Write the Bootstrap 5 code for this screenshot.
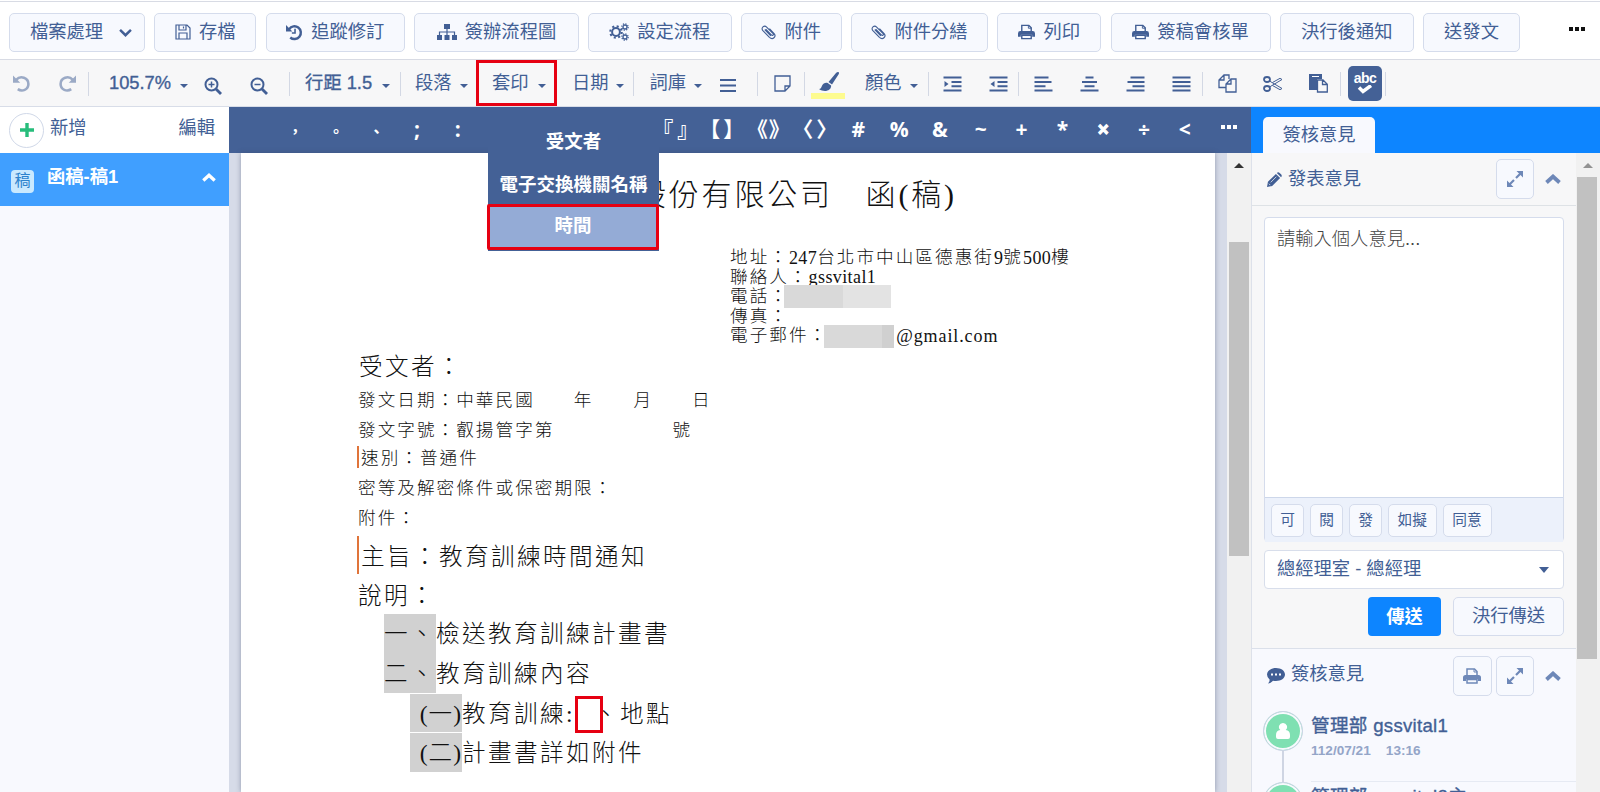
<!DOCTYPE html>
<html lang="zh-Hant">
<head>
  <meta charset="UTF-8">
  <title>函稿編輯</title>
  <meta name="viewport" content="width=device-width, initial-scale=1">
  <link href="https://cdn.jsdelivr.net/npm/bootstrap@5.3.0/dist/css/bootstrap.min.css" rel="stylesheet">
  <style>
    body {
      width: 1600px;
      height: 792px;
      overflow: hidden;
      background: #fff;
      color: #425f95;
      font-family: "Liberation Sans", "Noto Sans CJK TC", sans-serif;
      font-size: 18.3px;
      line-height: 1;
      white-space: nowrap;
    }
    svg {
      display: block;
      flex: none;
      fill: none;
      stroke: currentColor;
      stroke-width: 2;
    }
    .solid { fill: currentColor; stroke: none; }

    /* top buttons */
    .action-bar {
      height: 59px;
      border-top: 1px solid #d8dbe4;
      border-bottom: 1px solid #d8dbe4;
      margin-top: 1px;
      padding: 11px 15px 0 9px;
      gap: 9.25px;
    }
    .action-bar .btn, .tool-btn {
      height: 39px;
      padding: 0 0 1px;
      gap: 8px;
      border: 1.5px solid #d5dcec;
      border-radius: 5px;
      background: #f7f9fe;
      color: #425f95;
      font-size: 18.3px;
      line-height: 1;
    }
    .action-bar .btn:first-child { padding-left: 8px; }
    .dots-more { gap: 2px; margin: 14px 0 0 auto; }
    .dots-more i { width: 4px; height: 4px; background: #111; }

    /* format toolbar */
    .format-bar { height: 47px; background: #f7f7f8; border-bottom: 1px solid #d8dde8; padding-left: 13px; }
    .format-bar > div { flex: none; height: 46px; display: flex; align-items: center; padding-top: 1px; }
    .tool-sep { width: 1px; height: 24px; background: #d3d8e4; }
    .caret { border: 4px solid transparent; border-top-color: #425f95; border-bottom: 0; margin-top: 4px; }
    .num { -webkit-text-stroke: .35px currentColor; }
    .faded { opacity: .5; }
    .abc-btn { width: 34px; height: 35px; background: #446196; border-radius: 5px; color: #fff; font-size: 14px; font-weight: bold; padding-top: 5px; letter-spacing: -.5px; }
    .marker { width: 34px; height: 27px; padding-left: 8px; background: linear-gradient(#fdfb8f, #fdfb8f) bottom / 100% 6px no-repeat; margin-top: 4px; }

    .work-area { height: 685px; }
    /* draft list */
    .draft-list { width: 229px; background: #f8f9fe; }
    .draft-head { height: 46px; background: #fff; padding: 0 14px 0 9px; }
    .add-round { width: 35px; height: 35px; border: 1px solid #d0d8e8; border-radius: 50%; color: #27bd7b; margin-right: 6px; }
    .draft-item { height: 53px; background: #409fff; color: #fff; padding: 0 13px 0 11px; font-weight: bold; }
    .draft-tag { width: 23px; height: 23px; border-radius: 4px; background: #c9e9ff; color: #2d83cd; font-size: 16px; font-weight: normal; margin: 3px 13px 0 0; }

    /* symbol strip and sheet */
    .editor-pane { width: 1022px; }
    .symbol-bar { height: 46px; background: #446196; color: #fff; font: bold 21px "Open Sans", "Noto Sans CJK TC", sans-serif; line-height: 1; padding-left: 46px; }
    .symbol-bar > div { flex: none; text-align: center; padding-bottom: 2px; }
    .tiny-mark { font: bold 15px/1 "Noto Sans CJK TC", sans-serif; }
    .heavy { -webkit-text-stroke: 1px #fff; }
    .more-squares { display: flex; justify-content: center; gap: 2px; padding-bottom: 5px; }
    .more-squares i { width: 4px; height: 4px; background: #fff; }
    .sheet-area { height: 639px; background: #d6dbe8; padding-left: 12px; }
    .sheet {
      width: 974px;
      height: 639px;
      background: #fff;
      box-shadow: 0 0 5px rgba(60,70,100,.45);
      color: #111;
      font: 300 17.6px "Liberation Serif", "Noto Sans CJK TC", serif;
      letter-spacing: 2.05px;
      padding-left: 116px;
      overflow: hidden;
    }
    .line { display: flex; align-items: center; white-space: pre; line-height: 1; }
    .latin { letter-spacing: .4px; font-weight: 400; font-size: 18px; }
    .sheet-title { height: 44px; margin-top: 20px; padding-left: 279px; font-size: 30px; letter-spacing: 2.8px; }
    .contact { margin: 31px 0 2px 373px; }
    .contact .line { height: 19.6px; }
    .masked { background: #d9d9d9; height: 23px; }
    #letterBody .line { padding-top: 5px; }
    .big { font-size: 23.6px; letter-spacing: 2.4px; }
    #letterBody .marked { padding-top: 0; }
    .marked > span:not(.blank-slot) { padding-top: 3px; }
    .changed { background: linear-gradient(#e0743a, #e0743a) left center / 2px 100% no-repeat; padding-left: 4px; }
    .changed:not(.big) { background-size: 2px 22px; background-position: left 4px; }
    .num-mark { background: #d1d1d1; height: 100%; width: 52px; display: flex; align-items: center; }
    .in-paren { justify-content: flex-end; letter-spacing: 1px; }
    .blank-slot { width: 28px; height: 37px; border: 3px solid #e60012; margin: 4px -9px 0 0; z-index: 1; background: #fff; }

    .scroll-col { background: #f1f1f1; width: 24px; }
    .scroll-col b { display: block; background: #c1c1c1; }
    .scroll-arrow { width: 10px; margin: 10px auto 0; border: 5px solid transparent; border-bottom-color: #333; border-top: 0; }

    /* floating menu */
    .merge-menu { position: absolute; left: 488px; top: 107px; width: 171px; height: 144px; background: #446196; color: #fff; font: bold 18.5px/1 "Noto Sans CJK TC", sans-serif; padding-top: 12px; z-index: 3; }
    .merge-menu div { height: 43px; display: flex; align-items: center; justify-content: center; }
    .merge-menu .picked { background: #94abd6; border: 3px solid #e60012; height: 46px; margin: -1px 0 0 -1px; border-radius: 2px; padding-bottom: 5px; }
    .merge-frame { position: absolute; left: 476px; top: 60px; width: 81px; height: 46px; border: 3px solid #e60012; z-index: 3; }

    /* opinion panel */
    .opinion-pane { width: 349px; }
    .opinion-tabs { height: 46px; background: #0d85ff; padding: 10px 0 0 12px; }
    .opinion-tab { width: 112px; height: 36px; background: #f8f9fe; border-radius: 5px 5px 0 0; }
    .opinion-body { width: 325px; background: #f7f7f8; border-left: 1px solid #dde1ea; }
    .opinion-head { padding: 0 15px; height: 53px; }
    .opinion-head .chevron { margin-left: 11px; color: #6e88b8; }
    .square { width: 38.5px; height: 40px; padding: 0; color: #6e88b8; }
    .write-box { width: 300px; height: 325px; margin: 11px 0 0 12px; border: 1px solid #d5dcec; border-radius: 4px; background: #fff; }
    .write-box p { height: 279px; padding: 12px 12px; font-weight: 300; color: #444; }
    .quick-row { height: 45px; background: #ecf1fb; border-top: 1px solid #cdd7ea; padding-left: 6px; gap: 6px; }
    .quick-row .tool-btn { height: 33px; font-size: 14.7px; padding: 0; }
    .dept { width: 300px; height: 39px; margin: 8px 0 8px 12px; padding: 0 14px 0 12px; border: 1px solid #d8deeb; border-radius: 4px; background: #fff; }
    .send-btn { width: 73px; height: 39px; background: #0d85ff; color: #fff; border-radius: 4px; font-weight: bold; border: 0; padding: 0; font-size: 18.3px; margin-right: 12px; }
    .history { border-top: 1px solid #dbe0ea; background: #f8f9fe; margin-top: 12px; height: 144px; overflow: hidden; }
    .avatar { width: 40px; height: 40px; border-radius: 50%; border: 1px solid #ccd4e6; background: #7fe0b2; box-shadow: inset 0 0 0 2px #f8f9fe; color: #fff; flex: none; }
    .person { height: 71px; padding-left: 11px; gap: 8px; }
    .stem { width: 1.5px; height: 31px; background: #cfd5e3; margin: 0 auto; }
    .person-text { flex: 1; border-bottom: 1px solid #e6eaf3; padding-top: 6px; }
    .person-name { font-size: 18.6px; letter-spacing: .3px; }
    .stamp { font-size: 13.6px; font-weight: bold; color: #94a5c8; margin-top: 8px; white-space: pre; }
  </style>
</head>
<body>

<svg width="0" height="0" class="position-absolute">
  <symbol id="save" viewBox="0 0 16 16"><path stroke-width="1.2" d="M1 1h11l3 3v11H1zM4 1v5h7V1M8.5 2.5v2M4 15V9h8v6"/></symbol>
  <symbol id="history" viewBox="0 0 16 16"><path stroke-width="2.3" d="M3 4.8A6 6 0 1 1 4 12.7"/><path class="solid" d="M0 1v6h6z"/><path stroke-width="1.5" d="M8.5 4.5v4H5.5"/></symbol>
  <symbol id="sitemap" viewBox="0 0 20 16"><path class="solid" d="M7 0h6v5H7zM0 11h5v5H0zM7.5 11h5v5h-5zM15 11h5v5h-5z"/><path stroke-width="1.2" d="M10 5v6M2.5 11V8h15v3"/></symbol>
  <symbol id="gears" viewBox="0 0 20 18"><circle cx="7" cy="9" r="3.9" stroke-width="2"/><circle cx="7" cy="9" r="5.8" stroke-width="2" stroke-dasharray="2.1 2.45"/><circle cx="16" cy="4" r="2" stroke-width="1.3"/><circle cx="16" cy="4" r="3.2" stroke-width="1.2" stroke-dasharray="1.3 1.2"/><circle cx="16" cy="14" r="2" stroke-width="1.3"/><circle cx="16" cy="14" r="3.2" stroke-width="1.2" stroke-dasharray="1.3 1.2"/></symbol>
  <symbol id="clip" viewBox="0 0 16 16"><path stroke-width="1.2" d="M5 5l6 6c1.5 1.5 3-.2 1.7-1.5L6 2.7C3.5.3-.6 3.5 2 6.5l7 7.2c3.5 3.3 7.7-.7 5-4L9 4.5M4 5.5l6.500 6.600"/></symbol>
  <symbol id="print" viewBox="0 0 18 16"><path stroke-width="1.5" d="M4 8V1h7.5L14 3.5V8M4 11.5h10V15H4z"/><path class="solid" d="M2.5 7h13Q18 7 18 9.5V13h-3v-2H3v2H0V9.5Q0 7 2.5 7z"/><path stroke-width="1" d="M11 1v3h3"/></symbol>
  <symbol id="undo" viewBox="0 0 16 16"><path stroke-width="2.4" d="M3 4.5C7 0 14.5 2.5 14.5 8.5c0 5.5-6 7.5-10 4.8"/><path class="solid" d="M0 .5v6.8h6.800z"/></symbol>
  <symbol id="zoomin" viewBox="0 0 18 18"><circle cx="7.5" cy="7.5" r="6"/><path d="M12 12l5 5" stroke-width="2.8"/><path d="M4.5 7.5h6M7.5 4.5v6" stroke-width="1.5"/></symbol>
  <symbol id="zoomout" viewBox="0 0 18 18"><circle cx="7.5" cy="7.5" r="6"/><path d="M12 12l5 5" stroke-width="2.8"/><path d="M4.5 7.5h6" stroke-width="1.5"/></symbol>
  <symbol id="bars" viewBox="0 0 16 16"><path stroke-width="2.2" d="M0 2h16M0 7.5h16M0 13h16"/></symbol>
  <symbol id="note" viewBox="0 0 17 17"><path stroke-width="1.3" d="M1 1h15v10l-5 5H1zM16 11h-5v5"/></symbol>
  <symbol id="brush" viewBox="0 0 20 20"><path class="solid" d="M19 0c1 0 1.200 1 .8 2L13 12.500 9.500 10 17 1q1-1 2-1zM8.700 11l3.400 2.500c.5 5-6.500 7.500-12.100 3.500 2 0 2.200-1.500 3-3.200 1-2.500 3.600-3.500 5.700-2.800z"/></symbol>
  <symbol id="indent" viewBox="0 0 18 16"><path d="M0 1.500h18M8 6h10M8 10.200h10M0 14.500h18"/><path class="solid" d="M1 5v6l4-3z"/></symbol>
  <symbol id="outdent" viewBox="0 0 18 16"><path d="M0 1.500h18M8 6h10M8 10.200h10M0 14.500h18"/><path class="solid" d="M5 5v6L1 8z"/></symbol>
  <symbol id="aleft" viewBox="0 0 18 16"><path d="M0 1.500h14M0 6h17M0 10.200h11M0 14.500h18"/></symbol>
  <symbol id="acenter" viewBox="0 0 18 16"><path d="M5 1.500h8M1.500 6h15M4 10.200h10M0 14.500h18"/></symbol>
  <symbol id="aright" viewBox="0 0 18 16"><path d="M4 1.500h14M1 6h17M6 10.200h12M0 14.500h18"/></symbol>
  <symbol id="ajust" viewBox="0 0 18 16"><path d="M0 1.500h18M0 6h18M0 10.200h18M0 14.500h18"/></symbol>
  <symbol id="copy" viewBox="0 0 19 19"><path stroke-width="1.300" d="M8 13.500H1V6l5-5h5v4M6 1v5H1M13 5h5v13H8v-8zM13 5v5H8"/></symbol>
  <symbol id="cut" viewBox="0 0 20 18"><ellipse cx="4" cy="4.500" rx="3" ry="2.500" stroke-width="1.800"/><ellipse cx="4" cy="13.500" rx="3" ry="2.500" stroke-width="1.800"/><path stroke-width="1" d="M6.500 6L19 13.500l-2 1.200L9.500 10.500M6.500 12L19 4.500l-2-1.200L9.500 7.500"/></symbol>
  <symbol id="paste" viewBox="0 0 19 19"><path class="solid" d="M0 0h13v5H8v11H0z"/><path stroke-width="1.300" d="M8.500 6h5.500l4.300 4.300V18H8.500zM13.500 6v4.500h4.500"/><path stroke="#fff" stroke-width="1" d="M3 2.500h7"/></symbol>
  <symbol id="check" viewBox="0 0 16 10"><path stroke-width="3.500" d="M2 2.500l4 4 8-6"/></symbol>
  <symbol id="down" viewBox="0 0 12 8"><path stroke-width="2.300" d="M1 1.500l5 5 5-5"/></symbol>
  <symbol id="up" viewBox="0 0 16 10"><path stroke-width="3.800" d="M1.500 8.500L8 2.500l6.500 6"/></symbol>
  <symbol id="pencil" viewBox="0 0 16 16"><path class="solid" d="M0 16l1-5.500L9.500 2l4.500 4.500L5.500 15zM10.500 1q1.500-1.700 3 0l1.500 1.500q1.500 1.500 0 3z"/><path stroke="#f7f7f8" stroke-width=".8" d="M4 11l6-6M2 12.500l1.500 1.500"/></symbol>
  <symbol id="expand" viewBox="0 0 16 16"><path class="solid" d="M9.500 0H16v6.500zM0 9.500V16h6.500z"/><path stroke-width="2.200" d="M14 2L9 7M7 9l-5 5"/></symbol>
  <symbol id="chat" viewBox="0 0 18 16"><path class="solid" d="M9 0c5 0 9 2.800 9 6.500S14 13 9 13q-1.500 0-3-.3Q4 15 1 15.500q1.700-1.800 1.700-3.800Q0 9.500 0 6.500C0 2.800 4 0 9 0z"/><path stroke="#fff" stroke-width="2" stroke-dasharray="2 2" d="M4 6.500h10"/></symbol>
  <symbol id="user" viewBox="0 0 14 16"><path class="solid" d="M7 0a4 4 0 0 1 2.700 7Q14 7.500 14 12v2q0 2-2 2H2q-2 0-2-2v-2q0-4.500 4.300-5A4 4 0 0 1 7 0z"/></symbol>
</svg>

<div class="action-bar d-flex align-items-start" id="actionBar"></div>
<div class="format-bar d-flex" id="formatBar"></div>

<div class="work-area d-flex">
  <div class="draft-list">
    <div class="draft-head d-flex align-items-center">
      <span class="add-round d-flex align-items-center justify-content-center"><svg width="14" height="14" viewBox="0 0 14 14"><path stroke-width="3.4" d="M7 0v14M0 7h14"/></svg></span>
      <span class="pb-1">新增</span>
      <span class="ms-auto pb-1">編輯</span>
    </div>
    <div class="draft-item d-flex align-items-center">
      <span class="draft-tag d-flex align-items-center justify-content-center">稿</span>
      <span class="pb-1">函稿-稿1</span>
      <svg class="ms-auto mb-1" width="14" height="9"><use href="#up"/></svg>
    </div>
  </div>

  <div class="editor-pane">
    <div class="symbol-bar d-flex align-items-center" id="symbolBar"></div>
    <div class="sheet-area d-flex">
      <div class="sheet">
        <div class="line sheet-title">股份有限公司　函(稿)</div>
        <div class="contact">
          <div class="line">地址：<span class="latin">247</span>台北市中山區德惠街<span class="latin">9</span>號<span class="latin">500</span>樓</div>
          <div class="line">聯絡人：<span class="latin">gssvital1</span></div>
          <div class="line">電話：<span class="masked" style="width:59px;margin-left:-5px"></span><span class="masked opacity-75" style="width:48px"></span></div>
          <div class="line">傳真：</div>
          <div class="line">電子郵件：<span class="masked" style="width:58px;margin-left:-4px"></span><span class="masked" style="width:12px;background:#d0d0d0"></span><span class="latin" style="margin-left:2px;letter-spacing:.9px">@gmail.com</span></div>
        </div>
        <div id="letterBody"></div>
      </div>
      <div class="scroll-col ms-auto">
        <div class="scroll-arrow"></div>
        <b style="height:314px;width:20px;margin:74px 0 0 2px"></b>
      </div>
    </div>
  </div>

  <div class="opinion-pane">
    <div class="opinion-tabs"><div class="opinion-tab d-flex align-items-center justify-content-center">簽核意見</div></div>
    <div class="d-flex">
      <div class="opinion-body">
        <div class="opinion-head d-flex align-items-center border-bottom">
          <svg width="15" height="15"><use href="#pencil"/></svg>
          <span style="margin-left:6px">發表意見</span>
          <span class="tool-btn square ms-auto d-flex align-items-center justify-content-center"><svg width="16" height="16"><use href="#expand"/></svg></span>
          <svg class="chevron" width="16" height="10"><use href="#up"/></svg>
        </div>
        <div class="write-box">
          <p class="m-0">請輸入個人意見...</p>
          <div class="quick-row d-flex align-items-center" id="quickRow"></div>
        </div>
        <div class="dept d-flex align-items-center">總經理室 - 總經理<i class="ms-auto" style="border:5px solid transparent;border-top:6px solid #425f95;border-bottom:0"></i></div>
        <div class="d-flex" style="padding-left:116px">
          <button class="btn send-btn">傳送</button>
          <span class="tool-btn d-flex align-items-center justify-content-center" style="width:111px">決行傳送</span>
        </div>
        <div class="history">
          <div class="opinion-head d-flex align-items-center">
            <svg width="18" height="16"><use href="#chat"/></svg>
            <span style="margin:0 0 2px 6px">簽核意見</span>
            <span class="tool-btn square ms-auto d-flex align-items-center justify-content-center"><svg width="18" height="16"><use href="#print"/></svg></span>
            <span class="tool-btn square d-flex align-items-center justify-content-center" style="margin-left:4px"><svg width="16" height="16"><use href="#expand"/></svg></span>
            <svg class="chevron" width="16" height="10"><use href="#up"/></svg>
          </div>
          <div style="height:9px"></div>
          <div id="people"></div>
        </div>
      </div>
      <div class="scroll-col">
        <div class="scroll-arrow opacity-50"></div>
        <b style="height:482px;width:20px;margin:9px 0 0 1px"></b>
      </div>
    </div>
  </div>
</div>

<div class="merge-frame"></div>
<div class="merge-menu">
  <div>受文者</div>
  <div>電子交換機關名稱</div>
  <div class="picked">時間</div>
</div>

<script>
  const icon = (id, w = 16, h = 16, cls = "") => `<svg width="${w}" height="${h}" class="${cls}"><use href="#${id}"/></svg>`;

  // [label, width, icon]
  const actions = [
    ["檔案處理", 136, ""],
    ["存檔", 102, icon("save")],
    ["追蹤修訂", 139.5, icon("history", 17, 17)],
    ["簽辦流程圖", 164.5, icon("sitemap", 20, 16)],
    ["設定流程", 143.5, icon("gears", 20, 18)],
    ["附件", 101, icon("clip", 15, 16)],
    ["附件分繕", 137, icon("clip", 15, 16)],
    ["列印", 104, icon("print", 17, 16)],
    ["簽稿會核單", 160, icon("print", 17, 16)],
    ["決行後通知", 134, ""],
    ["送發文", 97, ""]
  ];
  document.getElementById("actionBar").innerHTML = actions.map(([label, w, ic], i) =>
    `<button class="btn d-flex align-items-center justify-content-center flex-shrink-0" style="width:${w}px">${ic}<span>${label}</span>${i ? "" : '<span class="ps-2">' + icon("down", 13, 9) + "</span>"}</button>`
  ).join("") + '<div class="dots-more d-flex"><i></i><i></i><i></i></div>';

  const sep = '<span class="tool-sep"></span>';
  const caret = '<span class="caret"></span>';
  // [slot width, content]
  const tools = [
    [45.5, icon("undo", 17, 17, "faded")], [29.5, `<span style="transform:scaleX(-1)">${icon("undo", 17, 17, "faded")}</span>`], [21, sep],
    [71, '<span class="num">105.7%</span>'], [24, caret], [46, icon("zoomin", 18, 18, "mt-1")], [39, icon("zoomout", 18, 18, "mt-1")], [16, sep],
    [77, '<span class="num">行距 1.5</span>'], [17.5, caret], [15.5, sep],
    [45, "段落"], [32, caret], [46, "套印"], [34, caret], [44, "日期"], [17, caret], [16.5, sep],
    [44.5, "詞庫"], [26, caret], [37, icon("bars", 16, 16, "mt-1")], [17, sep],
    [30, icon("note", 17, 17)], [7, sep], [54, `<span class="marker">${icon("brush", 20, 20)}</span>`],
    [45, "顏色"], [18, caret], [15, sep],
    [46, icon("indent", 19)], [29, icon("outdent", 19)], [16, sep],
    [46, icon("aleft", 19)], [46, icon("acenter", 19)], [46, icon("aright", 19)], [30, icon("ajust", 19)], [16, sep],
    [45, icon("copy", 19, 19)], [46, icon("cut", 20, 18)], [31, icon("paste", 19, 19)], [8, sep],
    [37, `<span class="abc-btn d-flex flex-column align-items-center">abc${icon("check", 16, 10)}</span>`], [5, sep]
  ];
  document.getElementById("formatBar").innerHTML = tools.map(([w, c]) => `<div style="width:${w}px">${c}</div>`).join("");

  const tiny = s => `<span class="tiny-mark">${s}</span>`;
  const pair = (s, gap) => `<span style="letter-spacing:${gap}px;margin-right:-${gap}px">${s}</span>`;
  const symbols = [[tiny("，"), 40.6], [tiny("。"), 40.6], [tiny("、"), 40.6], [";", 40.6], [":", 40.6], ["", 174],
    [pair("『』", 4), 46.5], [pair("【】", 3), 46.5], [pair("《》", 1), 46.5], [pair("〈〉", 3), 46.5],
    ["#", 40.8], ["%", 40.8], ["&amp;", 40.8], ["~", 40.8], ["+", 40.8], ["*", 40.8],
    ['<span class="heavy">×</span>', 40.8], ["÷", 40.8], ["&lt;", 40.8], ['<span class="more-squares"><i></i><i></i><i></i></span>', 48]];
  document.getElementById("symbolBar").innerHTML = symbols.map(([s, w]) => `<div style="width:${w}px">${s}</div>`).join("");

  // [row height, left indent, css class, content]
  const rows = [
    [34, 2, "big", "受文者："],
    [32, 1, "", '發文日期：中華民國<span style="width:39px"></span>年<span style="width:40px"></span>月<span style="width:39px"></span>日'],
    [28, 1, "", '發文字號：叡揚管字第<span style="width:118px"></span>號'],
    [28, 0, "changed", "速別：普通件"],
    [32, 1, "", "密等及解密條件或保密期限："],
    [28, 1, "", "附件："],
    [6, 0, "", ""],
    [38, 0, "changed big", "主旨：教育訓練時間通知"],
    [40, 1, "big", "說明："],
    [39.5, 27, "big marked", '<span class="num-mark">一、</span><span>檢送教育訓練計畫書</span>'],
    [39.5, 27, "big marked", '<span class="num-mark">二、</span><span>教育訓練內容</span>'],
    [1, 0, "", ""],
    [38, 53, "big marked", '<span class="num-mark in-paren">(一)</span><span>教育訓練:</span><span class="blank-slot"></span><span>、地點</span>'],
    [1, 0, "", ""],
    [39, 53, "big marked", '<span class="num-mark in-paren">(二)</span><span>計畫書詳如附件</span>']
  ];
  document.getElementById("letterBody").innerHTML = rows.map(([h, left, cls, html]) =>
    `<div style="padding-left:${left}px;height:${h}px"><div class="line ${cls}" style="height:${h}px">${html}</div></div>`
  ).join("");

  const quick = [["可", 33], ["閱", 33], ["發", 33], ["如擬", 48.5], ["同意", 49]];
  document.getElementById("quickRow").innerHTML = quick.map(([t, w]) =>
    `<span class="tool-btn d-flex align-items-center justify-content-center" style="width:${w}px">${t}</span>`
  ).join("");

  const people = [["管理部 gssvital1", "112/07/21    13:16"], ["管理部 gssvital2主", "112/07/21    13:10"]];
  document.getElementById("people").innerHTML = people.map(([name, time]) => `
    <div class="person d-flex">
      <div>
        <div class="avatar d-flex align-items-center justify-content-center">${icon("user", 14, 16)}</div>
        <div class="stem"></div>
      </div>
      <div class="person-text"><div class="person-name num">${name}</div><div class="stamp">${time}</div></div>
    </div>`).join("");
</script>
<script src="https://cdn.jsdelivr.net/npm/bootstrap@5.3.0/dist/js/bootstrap.bundle.min.js"></script>

</body>
</html>
